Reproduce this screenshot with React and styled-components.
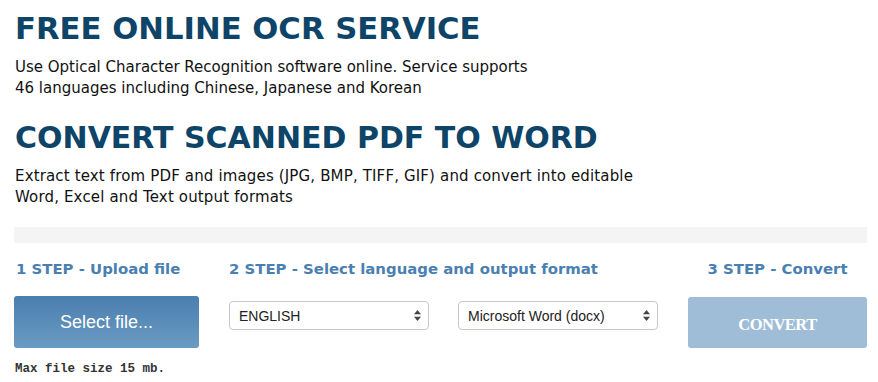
import React from 'react';
import styled, { createGlobalStyle } from 'styled-components';

const GlobalStyle = createGlobalStyle`
  html, body {
    margin: 0;
    padding: 0;
    background: #fff;
  }
  body {
    font-family: "DejaVu Sans", Verdana, sans-serif;
    color: #111;
  }
`;

const Page = styled.div`
  width: 853px;
  padding: 0 11px 0 14px;
`;

const Heading = styled.h1`
  margin: 0;
  padding-left: 1px;
  font-family: "DejaVu Sans", Verdana, sans-serif;
  font-weight: bold;
  font-size: ${(p) => p.$size}px;
  line-height: 36px;
  color: #0d4468;
  padding-top: ${(p) => p.$top}px;
`;

const Lead = styled.p`
  margin: 10px 0 0;
  padding-left: 1px;
  font-size: 15px;
  line-height: 21px;
  color: #111;
  letter-spacing: ${(p) => p.$spacing || 0}px;
`;

const Divider = styled.div`
  margin-top: 19px;
  height: 16px;
  background: #f4f4f4;
`;

const Steps = styled.div`
  display: grid;
  grid-template-columns: 185px 429px 179px;
  column-gap: 30px;
  margin-top: 17px;
`;

const Step = styled.div`
  display: flex;
  flex-direction: column;
  align-items: ${(p) => (p.$center ? 'center' : 'flex-start')};
`;

const StepTitle = styled.h3`
  margin: 0;
  padding-left: ${(p) => p.$indent || 0}px;
  font-size: 14.9px;
  line-height: 18px;
  font-weight: bold;
  color: #4a80b1;
  white-space: nowrap;
`;

const UploadButton = styled.button`
  margin-top: 18px;
  width: 185px;
  height: 52px;
  border: 0;
  border-radius: 3px;
  background: linear-gradient(#4a7ead, #6a9bc4);
  color: #fff;
  font-family: "Liberation Sans", Arial, sans-serif;
  font-size: 18px;
  cursor: pointer;
`;

const ConvertButton = styled.button`
  margin-top: 19px;
  width: 179px;
  height: 51px;
  border: 0;
  border-radius: 3px;
  background: #9fbdd7;
  color: #fff;
  padding-top: 6px;
  font-family: "Liberation Serif", "Times New Roman", serif;
  font-weight: bold;
  font-size: 16.5px;
  letter-spacing: -0.5px;
`;

const Note = styled.div`
  margin-top: 14px;
  padding-left: 1px;
  font-family: "Liberation Mono", "Courier New", monospace;
  font-weight: bold;
  font-size: 12.5px;
  color: #333;
`;

const SelectRow = styled.div`
  display: flex;
  justify-content: space-between;
  width: 100%;
  margin-top: 23px;
`;

const SelectBox = styled.div`
  position: relative;
  width: 200px;
`;

const Select = styled.select`
  appearance: none;
  -webkit-appearance: none;
  width: 100%;
  height: 29px;
  padding: 0 24px 0 9px;
  border: 1px solid #c8c8c8;
  border-radius: 4px;
  background: #fff;
  color: #222;
  font-family: "Liberation Sans", Arial, sans-serif;
  font-size: 14px;
`;

const Arrows = styled.svg`
  position: absolute;
  right: 8px;
  top: 9px;
  pointer-events: none;
`;

function FakeSelect({ options }) {
  return (
    <SelectBox>
      <Select defaultValue={options[0]}>
        {options.map((o) => (
          <option key={o}>{o}</option>
        ))}
      </Select>
      <Arrows width="7" height="11" viewBox="0 0 7 11">
        <path d="M3.5 0 L7 4.2 L0 4.2 Z" fill="#444" />
        <path d="M3.5 11 L7 6.8 L0 6.8 Z" fill="#444" />
      </Arrows>
    </SelectBox>
  );
}

export default function App() {
  return (
    <>
      <GlobalStyle />
      <Page>
        <Heading $top={11} $size={30.7}>FREE ONLINE OCR SERVICE</Heading>
        <Lead>
          Use Optical Character Recognition software online. Service supports
          <br />
          46 languages including Chinese, Japanese and Korean
        </Lead>
        <Heading $top={21} $size={30}>CONVERT SCANNED PDF TO WORD</Heading>
        <Lead $spacing={0.15}>
          Extract text from PDF and images (JPG, BMP, TIFF, GIF) and convert into editable
          <br />
          Word, Excel and Text output formats
        </Lead>
        <Divider />
        <Steps>
          <Step>
            <StepTitle $indent={2}>1 STEP - Upload file</StepTitle>
            <UploadButton>Select file...</UploadButton>
            <Note>Max file size 15 mb.</Note>
          </Step>
          <Step>
            <StepTitle>2 STEP - Select language and output format</StepTitle>
            <SelectRow>
              <FakeSelect options={['ENGLISH', 'CHINESE', 'JAPANESE', 'KOREAN']} />
              <FakeSelect options={['Microsoft Word (docx)', 'Microsoft Excel (xlsx)', 'Text Plain (txt)']} />
            </SelectRow>
          </Step>
          <Step $center>
            <StepTitle>3 STEP - Convert</StepTitle>
            <ConvertButton>CONVERT</ConvertButton>
          </Step>
        </Steps>
      </Page>
    </>
  );
}
